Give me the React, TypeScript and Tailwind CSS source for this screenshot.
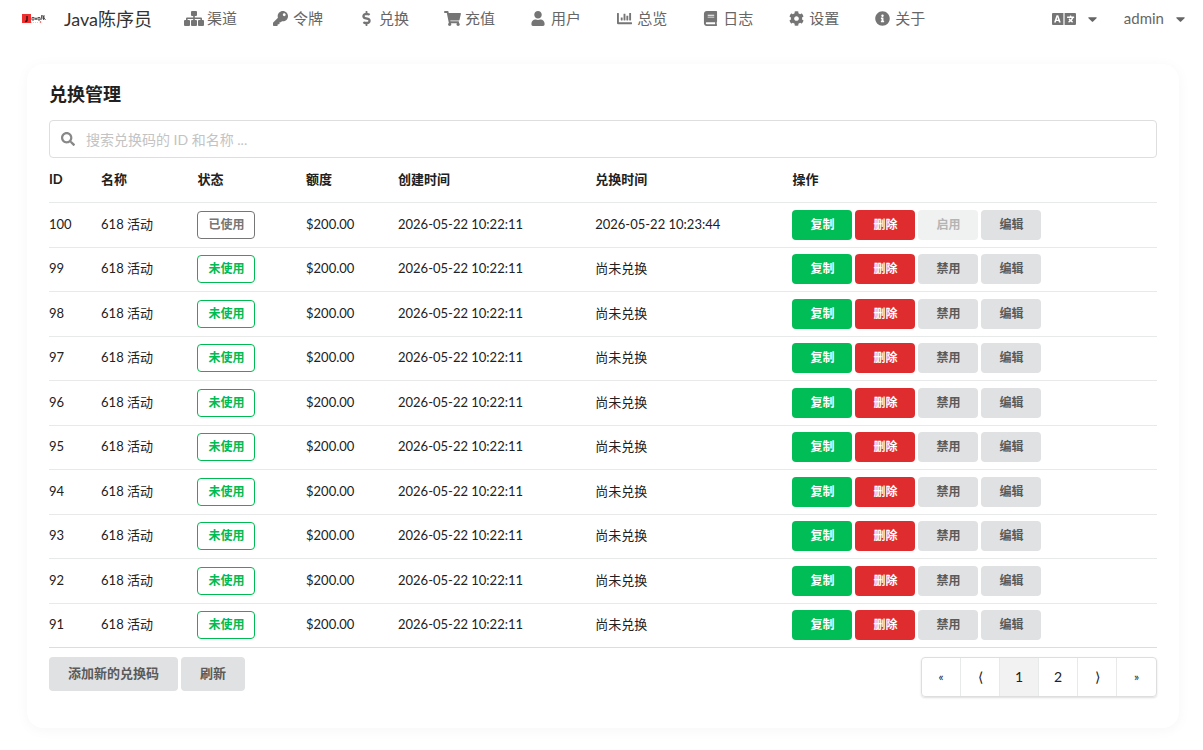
import type { ComponentType } from "react";
import {
  FaBook,
  FaCaretDown,
  FaChartBar,
  FaCog,
  FaDollarSign,
  FaInfoCircle,
  FaKey,
  FaLanguage,
  FaSearch,
  FaShoppingCart,
  FaUser,
} from "react-icons/fa";

function SitemapIcon({ className }: { className?: string }) {
  return (
    <svg viewBox="0 0 20 15" fill="currentColor" className={className} aria-hidden="true">
      <rect x="7" y="0" width="6" height="5" rx="1" />
      <rect x="0" y="9" width="6" height="6" rx="1" />
      <rect x="7" y="9" width="6" height="6" rx="1" />
      <rect x="14" y="9" width="6" height="6" rx="1" />
      <path d="M9.200 5h1.600v1.600h6.200q1 0 1 1v1.400h-1.600v-1h-5.600v1h-1.600v-1H3.600v1H2V7.600q0-1 1-1h6.200z" />
    </svg>
  );
}

const navItems: { label: string; icon: ComponentType<{ className?: string }>; size: string }[] = [
  { label: "渠道", icon: SitemapIcon, size: "h-[15px] w-5" },
  { label: "令牌", icon: FaKey, size: "size-[15px]" },
  { label: "兑换", icon: FaDollarSign, size: "size-[15px]" },
  { label: "充值", icon: FaShoppingCart, size: "h-[15px] w-[17px]" },
  { label: "用户", icon: FaUser, size: "h-[15px] w-4" },
  { label: "总览", icon: FaChartBar, size: "size-[15px]" },
  { label: "日志", icon: FaBook, size: "size-[15px]" },
  { label: "设置", icon: FaCog, size: "size-[15px]" },
  { label: "关于", icon: FaInfoCircle, size: "size-[15px]" },
];

const columns = [
  { label: "ID", width: "w-[4.7%]" },
  { label: "名称", width: "w-[8.7%]" },
  { label: "状态", width: "w-[9.8%]" },
  { label: "额度", width: "w-[8.3%]" },
  { label: "创建时间", width: "w-[17.8%]" },
  { label: "兑换时间", width: "w-[17.8%]" },
  { label: "操作", width: "" },
];

const redemptions = [100, 99, 98, 97, 96, 95, 94, 93, 92, 91].map((id) => ({
  id,
  name: "618 活动",
  used: id === 100,
  quota: "$200.00",
  created: "2026-05-22 10:22:11",
  redeemed: id === 100 ? "2026-05-22 10:23:44" : "尚未兑换",
}));

const pages = ["«", "⟨", "1", "2", "⟩", "»"];

const rowButton = "h-[30px] w-[60px] rounded text-xs font-bold";
const greyButton = "bg-[#e0e1e2] text-[#5a5a5a]";

function Logo() {
  return (
    <svg width="24" height="10" viewBox="0 0 24 10" aria-hidden="true">
      <rect x="0" y="0" width="9" height="9" fill="#f03030" />
      <path d="M5 2v4q0 1.500-2 1.500" fill="none" stroke="#401010" strokeWidth="1.500" />
      <path d="M10 3.500h2v2.500h-2zM13 3.500l1 2.500 1-2.500M16 3.500h2v2.500h-2z" fill="none" stroke="#555" />
      <path d="M19 2h4M20 1l-1 5M21.500 2v4M20 4h3M22 4l1.500 2" fill="none" stroke="#333" strokeWidth="0.800" />
      <path d="M9 8.500h8" stroke="#bbb" strokeWidth="0.600" strokeDasharray="1 1" />
      <circle cx="18.500" cy="8" r="0.800" fill="#e33" />
    </svg>
  );
}

function Header() {
  return (
    <header className="flex h-[37px] items-center text-[15px] text-[#666]">
      <a href="#" className="flex items-center pr-4 pl-[22px] text-lg text-[#333]">
        <Logo />
        <span className="ml-[18px] whitespace-nowrap">Java陈序员</span>
      </a>
      <nav className="flex">
        {navItems.map(({ label, icon: Icon, size }) => (
          <a key={label} href="#" className="flex items-center gap-1 px-[17px]">
            <span className="flex w-[18px] justify-center">
              <Icon className={`${size} shrink-0 text-[#757575]`} />
            </span>
            <span className="whitespace-nowrap">{label}</span>
          </a>
        ))}
      </nav>
      <div className="ml-auto flex items-center pr-[18px]">
        <button type="button" aria-label="语言" className="flex items-center gap-3">
          <FaLanguage className="h-5 w-6 text-[#757575]" />
          <FaCaretDown className="h-4 w-[9px]" />
        </button>
        <button type="button" className="ml-[27px] flex items-center gap-3">
          admin
          <FaCaretDown className="h-4 w-[9px]" />
        </button>
      </div>
    </header>
  );
}

function RedemptionTable() {
  return (
    <table className="w-full table-fixed border-b border-[#dcdddd] text-[13px]">
      <thead>
        <tr className="h-11 text-left">
          {columns.map((column) => (
            <th key={column.label} className={`${column.width} font-bold`}>
              {column.label}
            </th>
          ))}
        </tr>
      </thead>
      <tbody>
        {redemptions.map((item) => (
          <tr key={item.id} className="border-t border-[#e8e9e9] odd:h-[45px] even:h-11">
            <td>{item.id}</td>
            <td>{item.name}</td>
            <td>
              <span
                className={`flex h-7 w-[58px] items-center justify-center rounded border text-xs font-bold ${
                  item.used ? "border-[#767676] text-[#767676]" : "border-[#00bb51] text-[#00bb51]"
                }`}
              >
                {item.used ? "已使用" : "未使用"}
              </span>
            </td>
            <td>{item.quota}</td>
            <td>{item.created}</td>
            <td>{item.redeemed}</td>
            <td>
              <div className="flex gap-[3px]">
                <button type="button" className={`${rowButton} bg-[#00bd55] text-white`}>
                  复制
                </button>
                <button type="button" className={`${rowButton} bg-[#df2d2f] text-white`}>
                  删除
                </button>
                <button
                  type="button"
                  disabled={item.used}
                  className={`${rowButton} ${greyButton} disabled:opacity-45`}
                >
                  {item.used ? "启用" : "禁用"}
                </button>
                <button type="button" className={`${rowButton} ${greyButton}`}>
                  编辑
                </button>
              </div>
            </td>
          </tr>
        ))}
      </tbody>
    </table>
  );
}

export default function App() {
  return (
    <div className="min-h-screen bg-white font-['Lato','Noto_Sans_CJK_SC',sans-serif] text-[#212121]">
      <Header />
      <main className="mt-[27px] mr-6 ml-[27px] rounded-2xl bg-white px-[22px] pt-4 pb-[31px] shadow-[0_2px_14px_rgba(0,0,0,0.04)]">
        <h1 className="text-lg leading-7 font-bold">兑换管理</h1>
        <label className="relative mt-3 block">
          <FaSearch className="absolute top-3 left-3 size-[14px] text-[#888]" />
          <input
            type="text"
            aria-label="搜索兑换码"
            placeholder="搜索兑换码的 ID 和名称 ..."
            className="block h-[38px] w-full rounded border border-[#dededf] pr-3 pl-9 text-sm outline-none placeholder:text-[#c3c3c3]"
          />
        </label>
        <RedemptionTable />
        <div className="mt-[9px] flex items-start justify-between">
          <div className="flex gap-[3px]">
            <button type="button" className={`h-[34px] rounded px-[19px] text-[13px] font-bold ${greyButton}`}>
              添加新的兑换码
            </button>
            <button type="button" className={`h-[34px] rounded px-[19px] text-[13px] font-bold ${greyButton}`}>
              刷新
            </button>
          </div>
          <nav
            aria-label="分页"
            className="flex overflow-hidden rounded border border-[#dededf] shadow-[0_1px_2px_rgba(34,36,38,0.15)]"
          >
            {pages.map((page) => (
              <a
                key={page}
                href="#"
                className={`flex h-[38px] w-[39px] items-center justify-center border-r border-[#e8e9e9] last:border-r-0 ${
                  page === "1" ? "bg-[#f2f2f2]" : ""
                } ${page === "«" || page === "»" ? "text-xs" : "text-sm"}`}
              >
                {page}
              </a>
            ))}
          </nav>
        </div>
      </main>
    </div>
  );
}
